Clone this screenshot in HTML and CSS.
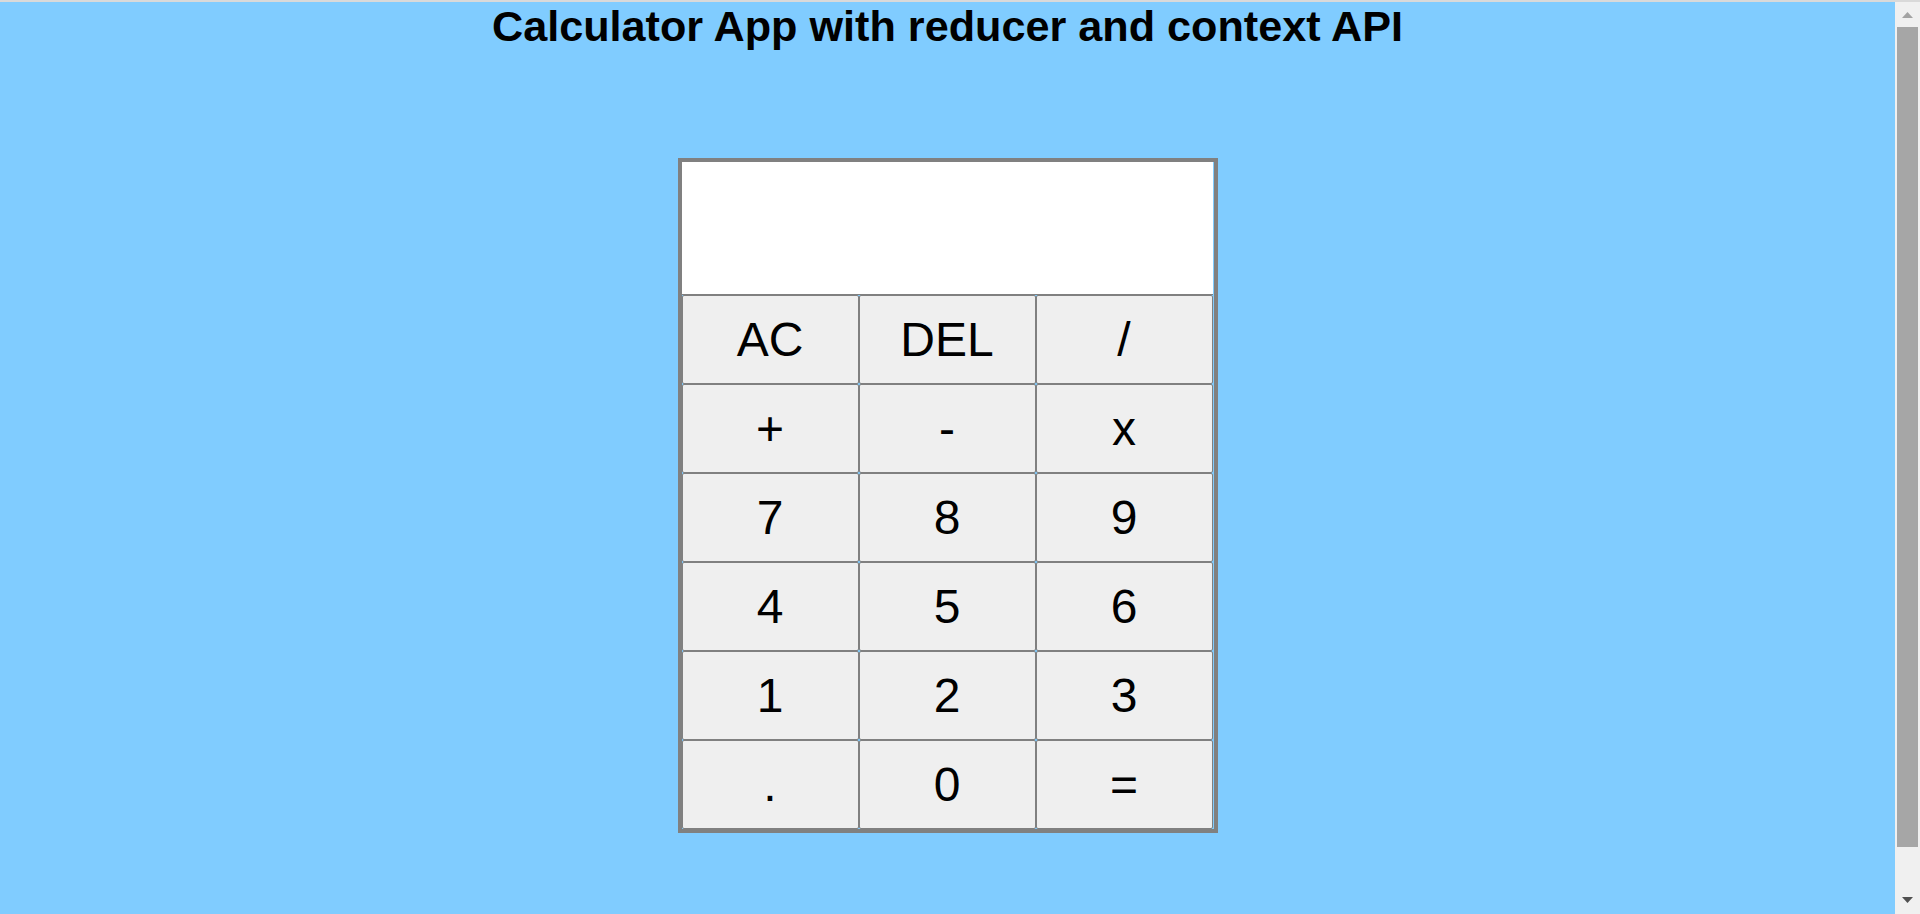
FILE: index.html
```html
<!DOCTYPE html>
<html lang="en">
<head>
<meta charset="utf-8">
<title>Calculator App with reducer and context API</title>
<link rel="stylesheet" href="styles.css">
</head>
<body>
<div class="window">
  <main class="app">
    <h1 class="title">Calculator App with reducer and context API</h1>
    <div class="calculator">
      <div class="output">
        <div class="previous-operand"></div>
        <div class="current-operand"></div>
      </div>
      <button class="key">AC</button>
      <button class="key">DEL</button>
      <button class="key">/</button>
      <button class="key">+</button>
      <button class="key">-</button>
      <button class="key">x</button>
      <button class="key">7</button>
      <button class="key">8</button>
      <button class="key">9</button>
      <button class="key">4</button>
      <button class="key">5</button>
      <button class="key">6</button>
      <button class="key">1</button>
      <button class="key">2</button>
      <button class="key">3</button>
      <button class="key">.</button>
      <button class="key">0</button>
      <button class="key">=</button>
    </div>
  </main>
  <div class="scrollbar">
    <div class="scroll-btn">
      <svg width="11" height="6" viewBox="0 0 11 6"><polygon points="0,6 11,6 5.5,0" fill="#a3a3a3"/></svg>
    </div>
    <div class="scroll-track">
      <div class="scroll-thumb"></div>
    </div>
    <div class="scroll-btn scroll-btn-down">
      <svg width="11" height="6" viewBox="0 0 11 6"><polygon points="0,0 11,0 5.5,6" fill="#505050"/></svg>
    </div>
  </div>
</div>
</body>
</html>
```

FILE: styles.css
```css
html, body {
  margin: 0;
  padding: 0;
  height: 100%;
  overflow: hidden;
}

body {
  background: #80ccff;
  font-family: "Liberation Sans", Arial, sans-serif;
}

.window {
  display: flex;
  height: 914px;
  box-sizing: border-box;
  border-top: 2px solid #d9d9d9;
}

.app {
  flex: 1;
  display: flex;
  flex-direction: column;
  align-items: center;
  min-width: 0;
}

.title {
  margin: 0;
  font-size: 2.7rem;
  font-weight: bold;
  color: #000;
  line-height: 49px;
}

.calculator {
  margin-top: 107px;
  display: grid;
  grid-template-columns: repeat(3, 177px);
  grid-template-rows: 133px repeat(6, 89px);
  width: 532px;
  height: 667px;
  border: 4px solid #808080;
}

.output {
  grid-column: 1 / -1;
  background: #fff;
  border-bottom: 1px solid #808080;
  display: flex;
  flex-direction: column;
  align-items: flex-end;
  justify-content: space-around;
  padding: 8px;
}

.key {
  font-family: "Liberation Sans", Arial, sans-serif;
  font-size: 48px;
  color: #000;
  background: #efefef;
  border: 1px solid #808080;
  border-radius: 2px;
  padding: 0;
  margin: 0;
  cursor: pointer;
}

.scrollbar {
  width: 25px;
  flex: none;
  background: #f0f0f0;
  display: flex;
  flex-direction: column;
}

.scroll-btn {
  height: 25px;
  display: flex;
  align-items: center;
  justify-content: center;
  flex: none;
}

.scroll-btn svg {
  display: block;
}

.scroll-btn-down {
  height: 26px;
  align-items: flex-start;
  padding-top: 9px;
  box-sizing: border-box;
}

.scroll-track {
  flex: 1;
  display: flex;
  flex-direction: column;
}

.scroll-thumb {
  margin-left: 2px;
  width: 21px;
  height: 820px;
  background: #a6a6a6;
}
```
